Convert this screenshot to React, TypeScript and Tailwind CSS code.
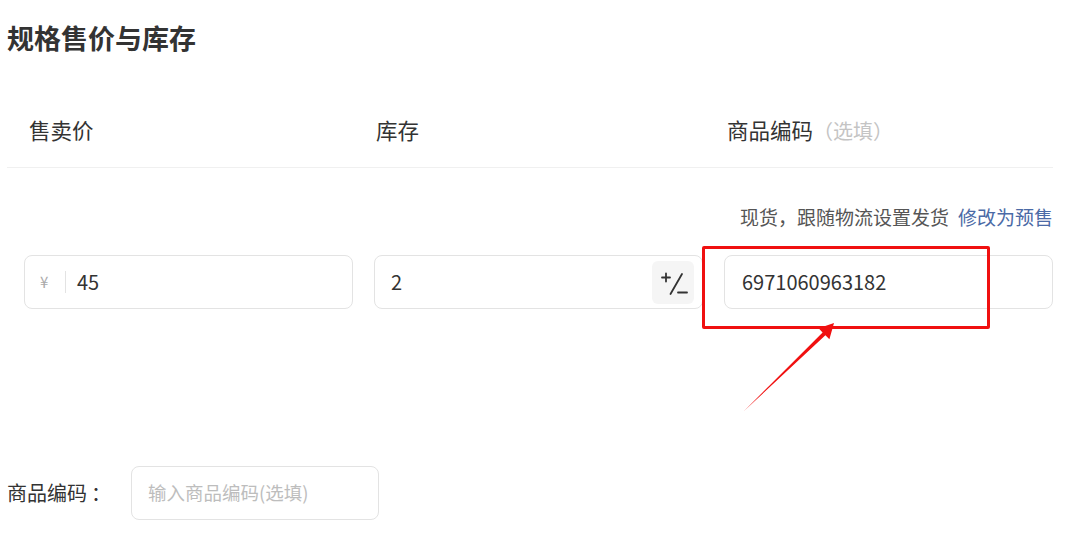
import React from 'react'

const font = { fontFamily: '"Microsoft YaHei", "Noto Sans CJK SC", "Noto Sans", sans-serif' }

function PlusMinusIcon() {
  return (
    <svg width="42" height="43" viewBox="0 0 42 43" fill="none" stroke="#333" strokeWidth="1.8" strokeLinecap="round">
      <path d="M14 12.5v8M10 16.5h8" />
      <path d="M18.5 33L30 13" />
      <path d="M26 31.5h9" />
    </svg>
  )
}

export default function App() {
  return (
    <div className="relative w-[1087px] h-[534px] bg-white text-[#333] overflow-hidden" style={font}>
      <div className="pl-[7px] pt-[20px] h-[76px]">
        <h1 className="text-[27px] leading-[36px] font-bold text-[#333]">规格售价与库存</h1>
      </div>

      <div className="ml-[7px] w-[1046px] border-b border-[#f0f0f0] pt-[42px] pb-[24px]">
        <div className="ml-[17px] w-[1029px] grid grid-cols-3 gap-[21px] text-[21.5px] leading-[24px]">
          <div className="pl-[5px]">售卖价</div>
          <div className="pl-[2px]">库存</div>
          <div className="pl-[3px]">
            商品编码<span className="text-[#c4c4c4] text-[20px]">（选填）</span>
          </div>
        </div>
      </div>

      <div className="w-[1053px] mt-[38px] flex justify-end text-[19px] leading-[22px]">
        <span className="text-[#555]">现货，跟随物流设置发货</span>
        <span className="ml-[9px] text-[#4b6aa6]">修改为预售</span>
      </div>

      <div className="ml-[24px] w-[1029px] mt-[27px] grid grid-cols-3 gap-[21px]">
        <div className="h-[54px] rounded-[8px] border border-[#e3e3e3] flex items-center pl-[15px] text-[20px]">
          <span className="text-[#aaa] text-[15px] w-[10px]">¥</span>
          <span className="ml-[15px] w-px h-[22px] bg-[#e3e3e3]" />
          <span className="ml-[11px]">45</span>
        </div>
        <div className="h-[54px] rounded-[8px] border border-[#e3e3e3] flex items-center justify-between pl-[16px] pr-[8px] text-[20px]">
          <span>2</span>
          <span className="w-[42px] h-[43px] rounded-[6px] bg-[#f5f5f5] flex items-center justify-center">
            <PlusMinusIcon />
          </span>
        </div>
        <div className="h-[54px] rounded-[8px] border border-[#e3e3e3] flex items-center pl-[17px] text-[20px]">
          6971060963182
        </div>
      </div>

      <div className="ml-[7px] mt-[157px] flex items-center">
        <span className="text-[20px] w-[124px]">商品编码<span className="ml-[4px]">：</span></span>
        <div className="w-[248px] h-[54px] rounded-[8px] border border-[#e3e3e3] flex items-center pl-[16px] text-[18.5px] text-[#bdbdbd]">
          输入商品编码(选填)
        </div>
      </div>

      <div className="absolute left-[702px] top-[246px] w-[288px] h-[83px] border-[3px] border-[#f01010] rounded-[2px] pointer-events-none" />
      <svg className="absolute left-0 top-0 pointer-events-none" width="1087" height="534">
        <polygon
          points="744,411 822.6,332.4 818.6,328.3 834,323 829.4,339.3 825.4,335.2"
          fill="#f01010"
        />
      </svg>
    </div>
  )
}
